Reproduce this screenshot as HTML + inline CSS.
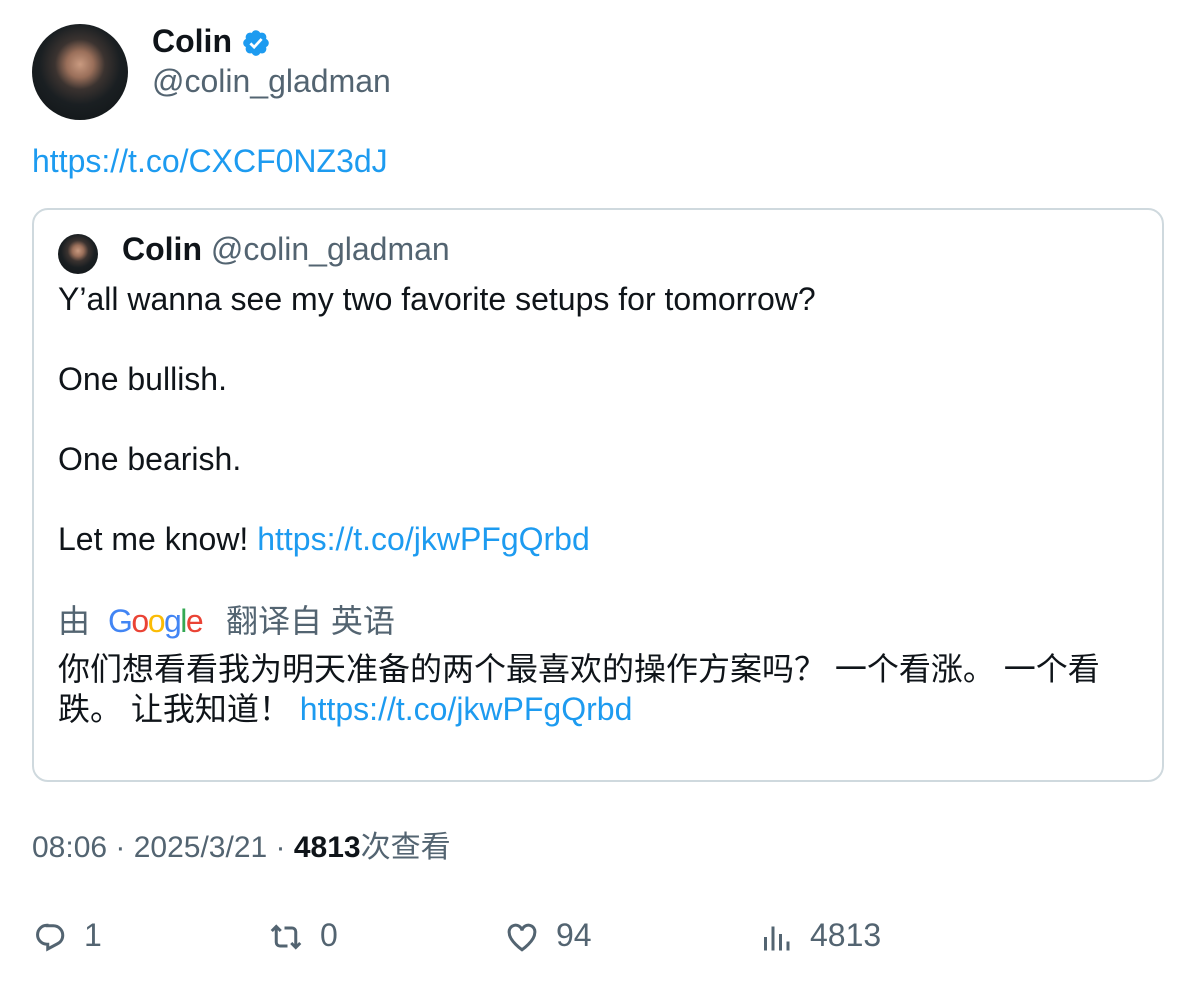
<!DOCTYPE html>
<html><head><meta charset="utf-8"><style>
body{margin:0;background:#fff;font-family:"Liberation Sans","Noto Sans CJK SC",sans-serif;color:#0f1419;width:1196px;height:982px;overflow:hidden;position:relative}
.a{position:absolute}
.av{border-radius:50%;background:radial-gradient(circle at 50% 42%,#c99a80 0,#9a6f5a 18%,#3b3330 34%,#1a1f22 55%,#0e1214 100%)}
.g{color:#536471}
.l{color:#1d9bf0}
</style></head><body>
<div class="a av" style="left:32px;top:24px;width:96px;height:96px"></div>
<div class="a" style="left:152px;top:21px;font-size:32px;font-weight:bold;line-height:40px">Colin</div>
<svg class="a" style="left:241px;top:28px" width="30" height="30" viewBox="0 0 24 24"><path fill="#1d9bf0" d="M22.25 12c0-1.43-.88-2.67-2.19-3.34.46-1.39.2-2.9-.81-3.91s-2.52-1.27-3.91-.81c-.66-1.31-1.91-2.19-3.34-2.19s-2.67.88-3.33 2.19c-1.4-.46-2.91-.2-3.92.81s-1.26 2.52-.8 3.91C2.63 9.33 1.75 10.57 1.75 12s.88 2.67 2.19 3.34c-.46 1.39-.2 2.9.81 3.91s2.52 1.26 3.91.81c.67 1.31 1.91 2.19 3.34 2.19s2.67-.88 3.34-2.19c1.39.46 2.9.2 3.91-.81s1.27-2.52.81-3.91c1.31-.67 2.19-1.91 2.19-3.34z"/><path fill="none" stroke="#fff" stroke-width="2.2" d="M7.5 12.3l3 3 6-6.5"/></svg>
<div class="a g" style="left:152px;top:61px;font-size:32px;line-height:40px">@colin_gladman</div>
<div class="a l" style="left:32px;top:141px;font-size:32px;line-height:40px">https://t.co/CXCF0NZ3dJ</div>
<div class="a" style="left:32px;top:208px;width:1128px;height:570px;border:2px solid #cfd9de;border-radius:16px"></div>
<div class="a av" style="left:58px;top:234px;width:40px;height:40px"></div>
<div class="a" style="left:122px;top:229px;font-size:32px;line-height:40px"><b>Colin</b> <span class="g">@colin_gladman</span></div>
<div class="a" style="left:58px;top:279px;font-size:32px;line-height:40px;width:1080px">Y’all wanna see my two favorite setups for tomorrow?<br><br>One bullish.<br><br>One bearish.<br><br>Let me know! <span class="l">https://t.co/jkwPFgQrbd</span></div>
<div class="a g" style="left:58px;top:601px;font-size:32px;line-height:40px">由</div>
<div class="a" style="left:108px;top:601px;font-size:32px;line-height:40px;letter-spacing:-1.5px"><span style="color:#4285f4">G</span><span style="color:#ea4335">o</span><span style="color:#fbbc05">o</span><span style="color:#4285f4">g</span><span style="color:#34a853">l</span><span style="color:#ea4335">e</span></div>
<div class="a g" style="left:226px;top:601px;font-size:32px;line-height:40px">翻译自 英语</div>
<div class="a" style="left:58px;top:649px;font-size:32px;line-height:40px;width:1060px">你们想看看我为明天准备的两个最喜欢的操作方案吗？ 一个看涨。 一个看跌。 让我知道！ <span class="l">https://t.co/jkwPFgQrbd</span></div>
<div class="a g" style="left:32px;top:828px;font-size:30px;line-height:40px">08:06 · 2025/3/21 · <b style="color:#0f1419">4813</b>次查看</div>
<div class="a g" style="left:32px;top:915px;font-size:32px;line-height:40px;width:1100px">
<svg class="a" style="left:0;top:4px" width="36" height="36" viewBox="0 0 24 24"><path fill="none" stroke="#536471" stroke-width="2" d="M10 4.5h4.2a6.3 6.3 0 0 1 6.3 6.3c0 2.5-1.4 4.7-3.5 5.7L10.5 20v-3.2H10a6.3 6.3 0 0 1 0-12.6z"/></svg>
<span class="a" style="left:52px;top:0">1</span>
<svg class="a" style="left:236px;top:4px" width="36" height="36" viewBox="0 0 24 24"><path fill="none" stroke="#536471" stroke-width="2" d="M2.5 8l3-3 3 3M5.5 5.5v10a2.5 2.5 0 0 0 2.5 2.5H13M21.5 16l-3 3-3-3M18.5 18.5v-10A2.5 2.5 0 0 0 16 6H11"/></svg>
<span class="a" style="left:288px;top:0">0</span>
<svg class="a" style="left:472px;top:4px" width="36" height="36" viewBox="0 0 24 24"><path fill="none" stroke="#536471" stroke-width="2" d="M12 20.5S3.5 14.5 3.5 9.3A4.3 4.3 0 0 1 12 7.6a4.3 4.3 0 0 1 8.5 1.7c0 5.2-8.5 11.2-8.5 11.2z"/></svg>
<span class="a" style="left:524px;top:0">94</span>
<svg class="a" style="left:726px;top:4px" width="36" height="36" viewBox="0 0 24 24"><path stroke="#536471" stroke-width="2" d="M5 21V12M10 21V5M15 21V10M20 21v-6"/></svg>
<span class="a" style="left:778px;top:0">4813</span>
</div>
</body></html>
